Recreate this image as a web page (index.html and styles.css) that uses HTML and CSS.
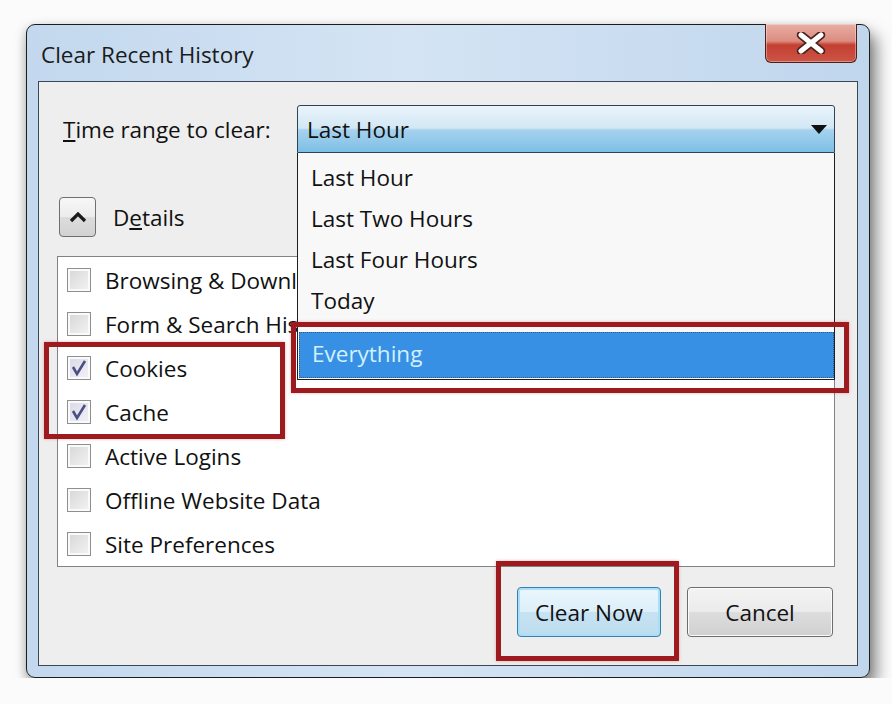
FILE: index.html
```html
<!DOCTYPE html>
<html lang="en">
<head>
    <meta charset="UTF-8">
    <title>Clear Recent History</title>
    <link rel="stylesheet" href="styles.css">
</head>
<body>
    <div class="window">
        <div class="titlebar">
            <span class="title">Clear Recent History</span>
            <button class="close-btn" aria-label="Close">
                <svg width="30" height="22" viewBox="0 0 30 22">
                    <path d="M5 3 L25 19 M25 3 L5 19" stroke="#4a2320" stroke-width="8.5" stroke-linecap="round"/>
                    <path d="M5 3 L25 19 M25 3 L5 19" stroke="#ffffff" stroke-width="5" stroke-linecap="round"/>
                </svg>
            </button>
        </div>

        <div class="client">
            <div class="range-row">
                <label class="range-label"><u>T</u>ime range to clear:</label>
                <div class="select">
                    <span>Last Hour</span>
                    <svg class="select-arrow" width="16" height="9" viewBox="0 0 16 9"><path d="M0 0 H16 L8 9 Z" fill="#111"/></svg>
                </div>
            </div>

            <div class="details-row">
                <button class="details-btn" aria-label="Hide details">
                    <svg width="18" height="12" viewBox="0 0 18 12"><path d="M2 10 L9 3 L16 10" fill="none" stroke="#1a1a1a" stroke-width="3.2"/></svg>
                </button>
                <span class="details-label">D<u>e</u>tails</span>
            </div>

            <ul class="items">
                <li><span class="check"></span>Browsing &amp; Download History</li>
                <li><span class="check"></span>Form &amp; Search History</li>
                <li><span class="check checked"><svg width="18" height="18" viewBox="0 0 18 18"><path d="M3 8 L7 15 L15 2" fill="none" stroke="#4b4f86" stroke-width="2.6"/></svg></span>Cookies</li>
                <li><span class="check checked"><svg width="18" height="18" viewBox="0 0 18 18"><path d="M3 8 L7 15 L15 2" fill="none" stroke="#4b4f86" stroke-width="2.6"/></svg></span>Cache</li>
                <li><span class="check"></span>Active Logins</li>
                <li><span class="check"></span>Offline Website Data</li>
                <li><span class="check"></span>Site Preferences</li>
            </ul>

            <div class="actions">
                <button class="btn btn-default">Clear Now</button>
                <button class="btn">Cancel</button>
            </div>

            <!-- open dropdown list over the content -->
            <ul class="menu">
                <li>Last Hour</li>
                <li>Last Two Hours</li>
                <li>Last Four Hours</li>
                <li>Today</li>
                <li class="selected"><span>Everything</span></li>
            </ul>

            <!-- red annotation boxes -->
            <div class="mark mark-everything"></div>
            <div class="mark mark-cookies"></div>
            <div class="mark mark-clear"></div>
        </div>
    </div>
</body>
</html>
```

FILE: styles.css
```css
/* --- Page --- */
body {
    margin: 0;
    padding: 24px 0 0 26px;
    background-color: #fbfbfb;
    font-family: 'Open Sans', 'Noto Sans', sans-serif;
    font-size: 22.5px;
    color: #111111;
}

/* --- Window frame --- */
.window {
    position: relative;
    box-sizing: border-box;
    width: 844px;
    height: 654px;
    padding: 0 11px 11px 11px;
    border: 1px solid #1c1c1c;
    border-radius: 9px;
    background: linear-gradient(to right, #c3d8ee, #d4e4f4 45%, #c0d6ed);
    box-shadow: 6px 10px 16px rgba(0, 0, 0, 0.5), -2px 2px 8px rgba(0, 0, 0, 0.15);
    display: flex;
    flex-direction: column;
}

.titlebar {
    height: 56px;
    display: flex;
    justify-content: space-between;
    align-items: flex-start;
}

.title {
    padding: 14px 0 0 3px;
    font-size: 22.5px;
    color: #1b1b1b;
}

.close-btn {
    width: 92px;
    height: 39px;
    margin: -1px 1px 0 0;
    padding: 0;
    border: 1px solid #4e1f1a;
    border-top: none;
    border-radius: 0 0 6px 6px;
    background: linear-gradient(to bottom, #e9aea4 0%, #dc8c80 45%, #c43f32 55%, #cc5546 100%);
    box-shadow: inset 0 0 0 1px rgba(255, 255, 255, 0.35);
    display: flex;
    justify-content: center;
    align-items: center;
}

/* --- Client area --- */
.client {
    position: relative;
    flex: 1;
    border: 1px solid #3b4754;
    background-color: #eeeeee;
    padding: 23px 22px 0 18px;
}

.range-row {
    height: 48px;
    display: flex;
    align-items: center;
}

.range-label {
    margin-left: 6px;
}

.select {
    box-sizing: border-box;
    width: 538px;
    height: 48px;
    margin-left: auto;
    padding: 0 7px 0 9px;
    border: 1px solid #2d4356;
    border-radius: 3px 3px 0 0;
    background: linear-gradient(to bottom, #eaf4fb 0%, #d2e7f4 48%, #a6d2ee 52%, #7dbfe6 100%);
    display: flex;
    justify-content: space-between;
    align-items: center;
}

.details-row {
    margin-top: 44px;
    height: 40px;
    display: flex;
    align-items: center;
}

.details-btn {
    box-sizing: border-box;
    width: 37px;
    height: 40px;
    margin-left: 2px;
    padding: 0;
    border: 1px solid #6f6f6f;
    border-radius: 4px;
    background: linear-gradient(to bottom, #f7f7f7 0%, #ececec 50%, #dcdcdc 51%, #d2d2d2 100%);
    display: flex;
    justify-content: center;
    align-items: center;
}

.details-label {
    margin-left: 17px;
}

/* --- Checkbox list --- */
.items {
    box-sizing: border-box;
    height: 311px;
    margin: 19px 0 0 0;
    padding: 1px 0 0 9px;
    list-style: none;
    border: 1px solid #7f8389;
    background-color: #ffffff;
    overflow: hidden;
}

.items li {
    height: 44px;
    display: flex;
    align-items: center;
    white-space: nowrap;
}

.check {
    box-sizing: border-box;
    flex: none;
    width: 24px;
    height: 24px;
    margin-right: 14px;
    border: 1px solid #8e8f8f;
    background: linear-gradient(135deg, #d6d6d6, #f4f4f4);
    box-shadow: inset 0 0 0 2px #fafafa;
    display: flex;
    justify-content: center;
    align-items: center;
}

.check.checked {
    background: linear-gradient(135deg, #d9d9e6, #f2f2f6);
}

/* --- Buttons --- */
.actions {
    margin-top: 20px;
    padding-right: 2px;
    display: flex;
    justify-content: flex-end;
    gap: 26px;
}

.btn {
    box-sizing: border-box;
    width: 146px;
    height: 50px;
    padding: 0;
    border: 1px solid #6d6d6d;
    border-radius: 4px;
    background: linear-gradient(to bottom, #f3f3f3 0%, #ebebeb 50%, #dddddd 51%, #d0d0d0 100%);
    box-shadow: inset 0 0 0 1px #fbfbfb;
    font-family: inherit;
    font-size: 22.5px;
    color: #111111;
}

.btn-default {
    width: 144px;
    border-color: #3b7db0;
    background: linear-gradient(to bottom, #eaf6fc 0%, #ddeff9 50%, #c7e3f3 51%, #bcdcef 100%);
    box-shadow: inset 0 0 0 2px #a8e0f8;
}

/* --- Open dropdown list --- */
.menu {
    position: absolute;
    left: 258px;
    top: 71px;
    box-sizing: border-box;
    width: 538px;
    height: 227px;
    margin: 0;
    padding: 4px 0 0 1px;
    list-style: none;
    border: 1px solid #1e1e1e;
    border-top: none;
    background-color: #f8f8f8;
}

.menu li {
    height: 41px;
    line-height: 41px;
    padding-left: 12px;
}

.menu li.selected {
    box-sizing: border-box;
    height: 46px;
    line-height: 42px;
    margin-top: 11px;
    padding-left: 12px;
    border: 1px dotted #2c5d8e;
    background-color: #3790e4;
    color: #d2f1ff;
}

/* --- Annotations --- */
.mark {
    position: absolute;
    box-sizing: border-box;
    border: 5px solid #9d1b1f;
    box-shadow: 0 0 3px rgba(190, 40, 40, 0.35);
}

.mark-everything {
    left: 252px;
    top: 240px;
    width: 558px;
    height: 71px;
}

.mark-cookies {
    left: 5px;
    top: 260px;
    width: 241px;
    height: 97px;
}

.mark-clear {
    left: 457px;
    top: 479px;
    width: 183px;
    height: 100px;
}
```
